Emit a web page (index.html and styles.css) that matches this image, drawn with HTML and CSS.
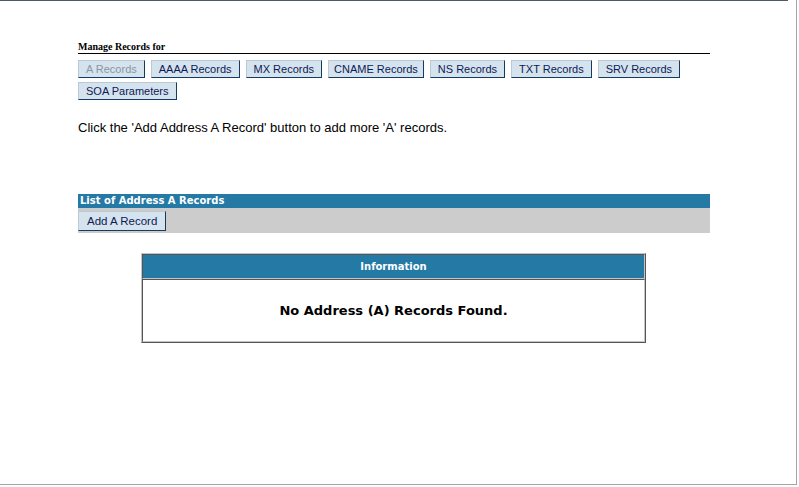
FILE: index.html
```html
<!DOCTYPE html>
<html>
<head>
<meta charset="utf-8">
<link rel="stylesheet" href="styles.css">
</head>
<body>
<div class="frame">
  <div class="topline"></div>
  <div class="content">
    <div class="manage-title">Manage Records for</div>
    <div class="tabs">
      <button class="btn disabled">A Records</button>
      <button class="btn">AAAA Records</button>
      <button class="btn">MX Records</button>
      <button class="btn narrow">CNAME Records</button>
      <button class="btn">NS Records</button>
      <button class="btn">TXT Records</button>
      <button class="btn">SRV Records</button>
      <button class="btn">SOA Parameters</button>
    </div>
    <p class="hint">Click the 'Add Address A Record' button to add more 'A' records.</p>
    <div class="list-head">List of Address A Records</div>
    <div class="toolbar">
      <button class="btn add">Add A Record</button>
    </div>
    <div class="info-wrap">
      <table class="info">
        <tr><th>Information</th></tr>
        <tr><td>No Address (A) Records Found.</td></tr>
      </table>
    </div>
  </div>
</div>
</body>
</html>
```
FILE: styles.css
```css
html, body {
  margin: 0;
  padding: 0;
  background: #ffffff;
}
.frame {
  width: 796px;
  height: 484px;
  border-right: 1px solid #a3a8ad;
  border-bottom: 1px solid #a3a8ad;
  background: #ffffff;
  overflow: hidden;
}
.topline {
  width: 788px;
  height: 1px;
  background: #4e5966;
}
.content {
  margin-left: 78px;
  width: 632px;
  padding-top: 41px;
}
.manage-title {
  font-family: "Liberation Serif", serif;
  font-weight: bold;
  font-size: 10px;
  line-height: 10px;
  color: #000;
  padding-bottom: 1px;
  border-bottom: 1px solid #000;
}
.tabs {
  display: flex;
  flex-wrap: wrap;
  column-gap: 6px;
  row-gap: 4px;
  margin-top: 6px;
  width: 608px;
}
.btn {
  font-family: "Liberation Sans", Arial, sans-serif;
  font-size: 11px;
  height: 18px;
  line-height: 14px;
  padding: 0 7px;
  margin: 0;
  background: #d5e3ee;
  color: #0d1a55;
  border: 1px solid;
  border-color: #b9c9d6 #143c60 #143c60 #b9c9d6;
  border-radius: 0;
  cursor: pointer;
}
.btn.narrow {
  padding: 0 5px;
}
.btn.disabled {
  color: #8a96a0;
}
.hint {
  font-family: "Liberation Sans", Arial, sans-serif;
  font-size: 13px;
  line-height: 16px;
  color: #000;
  margin: 20px 0 0 0;
}
.list-head {
  margin-top: 58px;
  background: #2479a5;
  color: #ffffff;
  font-family: "DejaVu Sans", Verdana, sans-serif;
  font-weight: bold;
  font-size: 10px;
  line-height: 14px;
  padding-left: 2px;
}
.toolbar {
  background: #cccccc;
  height: 25px;
  padding-top: 3px;
  box-sizing: border-box;
}
.btn.add {
  height: 20px;
  font-size: 11.5px;
  padding: 0 8px;
}
.info-wrap {
  margin-top: 20px;
  display: flex;
  justify-content: center;
  padding-right: 1px;
}
.info {
  width: 505px;
  border-collapse: separate;
  border-spacing: 0;
  border: 1px solid;
  border-color: #c4c4c4 #555555 #555555 #c4c4c4;
}
.info th, .info td {
  border: 1px solid;
  border-color: #555555 #c4c4c4 #c4c4c4 #555555;
  padding: 0;
  text-align: center;
}
.info th {
  background: #2479a5;
  color: #ffffff;
  font-family: "DejaVu Sans", Verdana, sans-serif;
  font-weight: bold;
  font-size: 10px;
  height: 23px;
}
.info td {
  background: #ffffff;
  color: #000;
  font-family: "DejaVu Sans", Verdana, sans-serif;
  font-weight: bold;
  font-size: 13px;
  height: 61px;
}
```
